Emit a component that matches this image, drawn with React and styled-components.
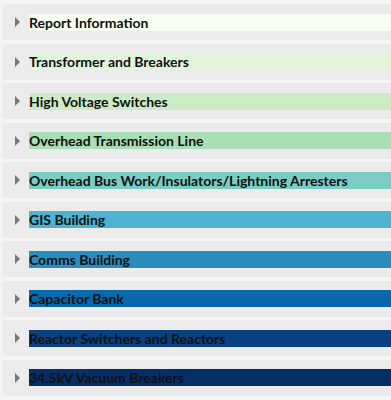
import styled, { createGlobalStyle } from "styled-components";

const GlobalStyle = createGlobalStyle`
  html, body {
    margin: 0;
    padding: 0;
    background: #f4f4f4;
    overflow: hidden;
  }
  body {
    font-family: Lato, "Open Sans", sans-serif;
  }
`;

const SECTIONS = [
  { name: "Report Information", color: "#f7fcf0" },
  { name: "Transformer and Breakers", color: "#e0f3db" },
  { name: "High Voltage Switches", color: "#ccebc5" },
  { name: "Overhead Transmission Line", color: "#a8ddb5" },
  { name: "Overhead Bus Work/Insulators/Lightning Arresters", color: "#7bccc4" },
  { name: "GIS Building", color: "#4eb3d3" },
  { name: "Comms Building", color: "#2b8cbe" },
  { name: "Capacitor Bank", color: "#0868ac" },
  { name: "Reactor Switchers and Reactors", color: "#084081" },
  { name: "34.5kV Vacuum Breakers", color: "#062f6a" },
];

const App = () => {
  return (
    <>
      <GlobalStyle />
      <List>
        {SECTIONS.map(({ name, color }) => (
          <Section key={name}>
            <Caret />
            <Title color={color}>{name}</Title>
          </Section>
        ))}
      </List>
    </>
  );
};

const List = styled.div`
  display: flex;
  flex-direction: column;
  gap: 3.5px;
  padding: 4px 0 0 2px;
`;

const Section = styled.div`
  display: flex;
  align-items: center;
  height: 36px;
  margin-right: -10px;
  background: #ebebeb;
  border-radius: 4px;
  cursor: pointer;
`;

const Caret = styled.span`
  width: 0;
  height: 0;
  margin: 0 9px 0 13px;
  border-top: 5px solid transparent;
  border-bottom: 5px solid transparent;
  border-left: 5px solid #767676;
`;

const Title = styled.span`
  flex: 1;
  height: 17px;
  line-height: 18px;
  font-size: 14px;
  font-weight: 700;
  color: #111;
  white-space: nowrap;
  background: ${({ color }) => color};
`;

export default App;
